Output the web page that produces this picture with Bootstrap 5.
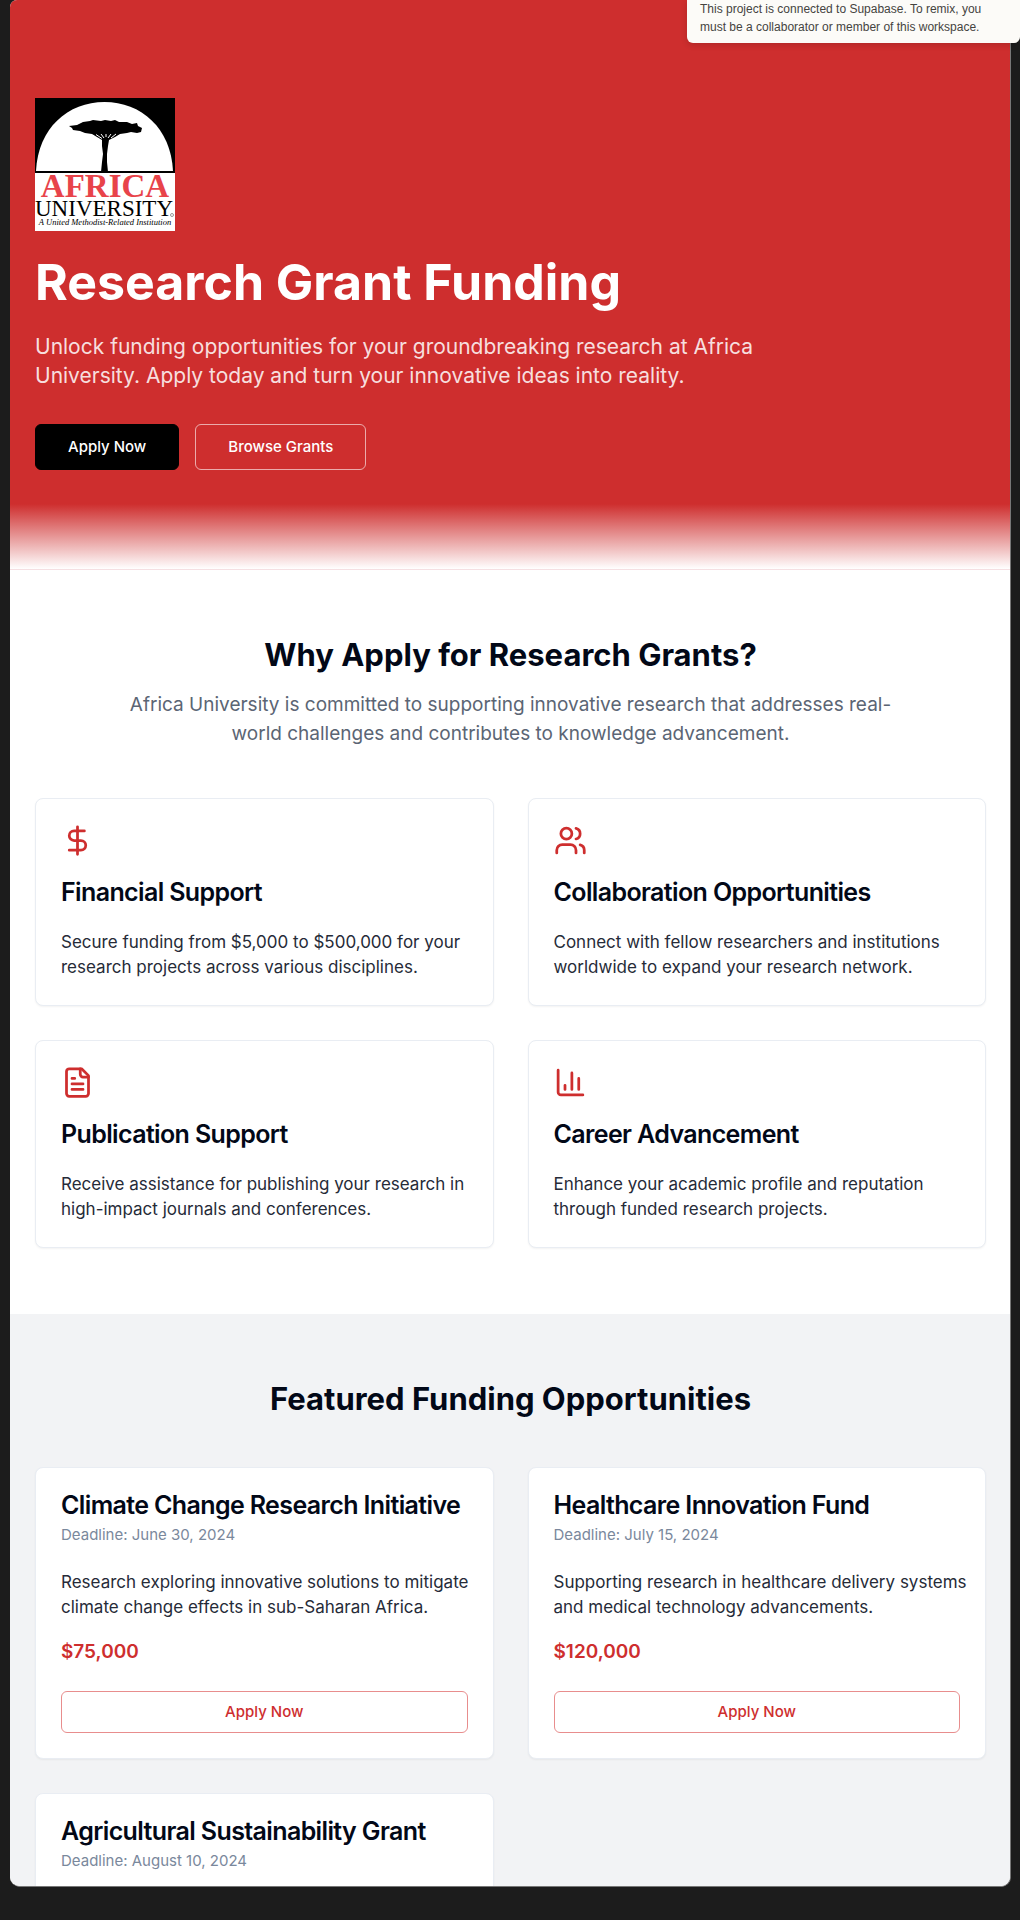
<!DOCTYPE html>
<html lang="en">
<head>
<meta charset="utf-8">
<meta name="viewport" content="width=device-width, initial-scale=1">
<title>Research Grant Funding</title>
<link href="https://cdn.jsdelivr.net/npm/bootstrap@5.3.0/dist/css/bootstrap.min.css" rel="stylesheet">
<style>
  :root { --brand: #ce2e2e; --ink: #020817; }
  body { background: #1c1c1c; font-family: Inter, "Liberation Sans", sans-serif; color: var(--ink); }
  .shell { height: 100vh; padding: 0 9px 33px 10px; }
  .preview { height: 100%; overflow: hidden; background: #fff; border-radius: 7px 7px 10px 10px; border: solid #777; border-width: 0 1px 1px 0; }
  .gutter { padding-left: 25px; padding-right: 24px; }
  .hero { background: var(--brand); color: #fff; padding-top: 98px; padding-bottom: 34px; }
  .logo { width: 140px; height: 133px; display: block; margin-bottom: 26px; }
  .hero h1 { font-size: 50px; line-height: 50px; font-weight: 700; margin-bottom: 25px; }
  .hero p { font-size: 21px; line-height: 29px; max-width: 750px; color: rgba(255,255,255,.86); margin-bottom: 34px; }
  .btn { font-size: 15px; line-height: 20px; font-weight: 500; border-radius: 6px; }
  .btn-hero { padding: 12px 32px; --bs-btn-color: #fff; --bs-btn-border-color: rgba(255,255,255,.6); }
  .btn-hero.btn-dark { --bs-btn-bg: #000; --bs-btn-border-color: #000; }
  .fade-band { height: 66px; background: linear-gradient(var(--brand), #fff); border-bottom: 1px solid #f5dfe2; }
  .why { padding-top: 66px; padding-bottom: 66px; }
  .section-title { font-size: 31px; line-height: 37px; font-weight: 700; text-align: center; }
  .why .section-title { margin-bottom: 17px; }
  .intro { font-size: 19px; line-height: 29px; max-width: 770px; color: #5b6574; margin-bottom: 50px; }
  .card { --bs-card-border-color: #e9edf3; border-radius: 8px; box-shadow: 0 1px 2px rgba(0,0,0,.05); color: var(--ink); }
  .card-body { padding: 25px; }
  .cards { --bs-gutter-x: 34px; --bs-gutter-y: 34px; }
  .card svg { width: 33px; height: 33px; display: block; color: var(--brand); margin-bottom: 18px; }
  .card-title { font-size: 25px; line-height: 25px; font-weight: 600; letter-spacing: -.025em; }
  .feature .card-title { line-height: 35px; margin-bottom: 20px; }
  .card-text { font-size: 17px; line-height: 25px; color: #262b38; margin-right: -12px; }
  .featured { background: #f2f3f5; padding-top: 66px; min-height: 700px; }
  .featured .section-title { margin-bottom: 50px; }
  .deadline { font-size: 15px; line-height: 20px; color: #7a889c; margin: 7px 0 25px; }
  .amount { font-size: 19px; line-height: 28px; font-weight: 600; color: var(--brand); margin: 18px 0 25px; }
  .btn-apply { --bs-btn-color: #ce2e2e; --bs-btn-border-color: #e88d8d; padding: 10px; width: 100%; }
  .cut-card { min-height: 290px; }
  .notice { position: absolute; top: 0; right: 0; width: 333px; height: 43px; padding: 0 13px; background: #fcfbf8; color: #45443f; border-radius: 0 0 6px 6px; font-family: "Liberation Sans", sans-serif; font-size: 12px; line-height: 18px; box-shadow: 0 2px 6px rgba(0,0,0,.15); }
</style>
</head>
<body>
<div class="shell">
  <main class="preview">
    <header class="hero gutter">
      <svg class="logo" viewBox="0 0 140 133" role="img" aria-label="Africa University">
        <rect width="140" height="133" fill="#fff"/>
        <rect width="140" height="75" fill="#000"/>
        <path d="M1 73C3 30 33 4 69.500 4S136 30 138 73Z" fill="#fff"/>
        <path d="M34 28L42 27 48 24 55 23 58 22 66 23 70 22 76 23 80 22 84 24 92 24 97 26 102 25 103 28 107 30 106 34 102 35 96 34 92 35 85 36 80 39 74 42 73 48 72 56 72 64 73 74H66L67 64 68 56 67 48 67 42 62 39 57 36 50 35 45 33 38 32 37 30Z" fill="#000"/>
        <path d="M61 36.500l6 4M66 36l3 4M71 36v3M76 36l-3 4M81 36l-5 4" stroke="#fff" stroke-width="1"/>
        <g font-family="Liberation Serif, serif">
          <text x="70" y="99" text-anchor="middle" font-size="33" font-weight="700" fill="#e8434a">AFRICA</text>
          <text x="69" y="118" text-anchor="middle" font-size="23">UNIVERSITY</text>
          <text x="70" y="127" text-anchor="middle" font-size="8.500" font-style="italic">A United Methodist-Related Institution</text>
        </g>
        <circle cx="137" cy="117" r="1.500" fill="none" stroke="#555" stroke-width=".6"/>
      </svg>
      <h1>Research Grant Funding</h1>
      <p>Unlock funding opportunities for your groundbreaking research at Africa University. Apply today and turn your innovative ideas into reality.</p>
      <div class="d-flex gap-3">
        <button type="button" class="btn btn-dark btn-hero">Apply Now</button>
        <button type="button" class="btn btn-hero">Browse Grants</button>
      </div>
    </header>
    <div class="fade-band"></div>

    <section class="why gutter">
      <h2 class="section-title">Why Apply for Research Grants?</h2>
      <p class="intro text-center mx-auto">Africa University is committed to supporting innovative research that addresses real-world challenges and contributes to knowledge advancement.</p>
      <div class="row row-cols-1 row-cols-md-2 cards">
        <div class="col"><article class="card feature h-100"><div class="card-body">
          <svg viewBox="0 0 24 24" fill="none" stroke="currentColor" stroke-width="2" stroke-linecap="round" stroke-linejoin="round" aria-hidden="true"><path d="M12 2v20M17 5H9.500a3.500 3.500 0 0 0 0 7h5a3.500 3.500 0 0 1 0 7H6"/></svg>
          <h3 class="card-title">Financial Support</h3>
          <p class="card-text">Secure funding from $5,000 to $500,000 for your research projects across various disciplines.</p>
        </div></article></div>
        <div class="col"><article class="card feature h-100"><div class="card-body">
          <svg viewBox="0 0 24 24" fill="none" stroke="currentColor" stroke-width="2" stroke-linecap="round" stroke-linejoin="round" aria-hidden="true"><path d="M16 21v-2a4 4 0 0 0-4-4H6a4 4 0 0 0-4 4v2"/><circle cx="9" cy="7" r="4"/><path d="M22 21v-2a4 4 0 0 0-3-3.870M16 3.130a4 4 0 0 1 0 7.750"/></svg>
          <h3 class="card-title">Collaboration Opportunities</h3>
          <p class="card-text">Connect with fellow researchers and institutions worldwide to expand your research network.</p>
        </div></article></div>
        <div class="col"><article class="card feature h-100"><div class="card-body">
          <svg viewBox="0 0 24 24" fill="none" stroke="currentColor" stroke-width="2" stroke-linecap="round" stroke-linejoin="round" aria-hidden="true"><path d="M15 2H6a2 2 0 0 0-2 2v16a2 2 0 0 0 2 2h12a2 2 0 0 0 2-2V7Z"/><path d="M14 2v4a2 2 0 0 0 2 2h4M10 9H8M16 13H8M16 17H8"/></svg>
          <h3 class="card-title">Publication Support</h3>
          <p class="card-text">Receive assistance for publishing your research in high-impact journals and conferences.</p>
        </div></article></div>
        <div class="col"><article class="card feature h-100"><div class="card-body">
          <svg viewBox="0 0 24 24" fill="none" stroke="currentColor" stroke-width="2" stroke-linecap="round" stroke-linejoin="round" aria-hidden="true"><path d="M3 3v16a2 2 0 0 0 2 2h16M18 17V9M13 17V5M8 17v-3"/></svg>
          <h3 class="card-title">Career Advancement</h3>
          <p class="card-text">Enhance your academic profile and reputation through funded research projects.</p>
        </div></article></div>
      </div>
    </section>

    <section class="featured gutter">
      <h2 class="section-title">Featured Funding Opportunities</h2>
      <div class="row row-cols-1 row-cols-md-2 cards">
        <div class="col"><article class="card h-100"><div class="card-body">
          <h3 class="card-title mb-0">Climate Change Research Initiative</h3>
          <p class="deadline">Deadline: June 30, 2024</p>
          <p class="card-text mb-0">Research exploring innovative solutions to mitigate climate change effects in sub-Saharan Africa.</p>
          <p class="amount">$75,000</p>
          <button type="button" class="btn btn-apply">Apply Now</button>
        </div></article></div>
        <div class="col"><article class="card h-100"><div class="card-body">
          <h3 class="card-title mb-0">Healthcare Innovation Fund</h3>
          <p class="deadline">Deadline: July 15, 2024</p>
          <p class="card-text mb-0">Supporting research in healthcare delivery systems and medical technology advancements.</p>
          <p class="amount">$120,000</p>
          <button type="button" class="btn btn-apply">Apply Now</button>
        </div></article></div>
        <div class="col"><article class="card cut-card"><div class="card-body">
          <h3 class="card-title mb-0">Agricultural Sustainability Grant</h3>
          <p class="deadline">Deadline: August 10, 2024</p>
        </div></article></div>
      </div>
    </section>
  </main>
</div>
<div class="notice" role="status">This project is connected to Supabase. To remix, you must be a collaborator or member of this workspace.</div>
<script src="https://cdn.jsdelivr.net/npm/bootstrap@5.3.0/dist/js/bootstrap.bundle.min.js"></script>
</body>
</html>
